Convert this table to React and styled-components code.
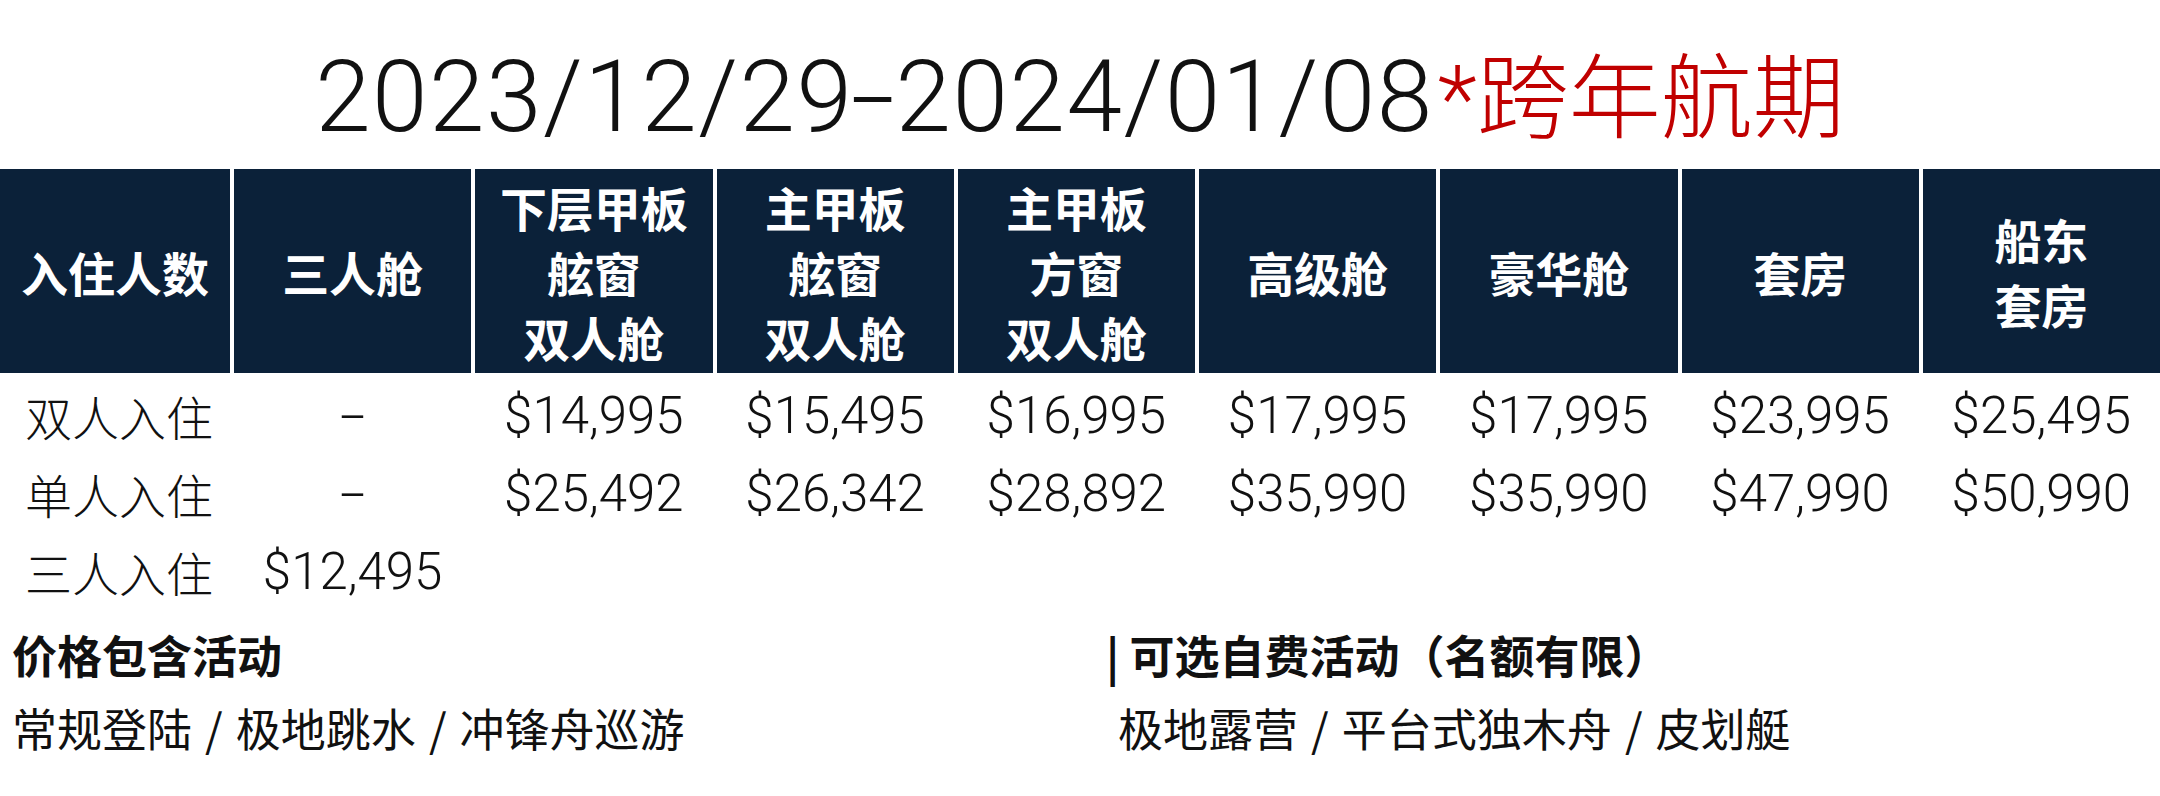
import React from 'react';
import styled, { createGlobalStyle } from 'styled-components';

const GlobalStyle = createGlobalStyle`
  html, body {
    margin: 0;
    padding: 0;
    background: #ffffff;
  }
  body {
    width: 2160px;
    height: 796px;
    overflow: hidden;
    font-family: "Noto Sans CJK SC", sans-serif;
    color: #111111;
  }
`;

const cabins = [
  ['入住人数'],
  ['三人舱'],
  ['下层甲板', '舷窗', '双人舱'],
  ['主甲板', '舷窗', '双人舱'],
  ['主甲板', '方窗', '双人舱'],
  ['高级舱'],
  ['豪华舱'],
  ['套房'],
  ['船东', '套房'],
];

const rows = [
  { label: '双人入住', prices: ['-', '$14,995', '$15,495', '$16,995', '$17,995', '$17,995', '$23,995', '$25,495'] },
  { label: '单人入住', prices: ['-', '$25,492', '$26,342', '$28,892', '$35,990', '$35,990', '$47,990', '$50,990'] },
  { label: '三人入住', prices: ['$12,495'] },
];

export default function App() {
  return (
    <Page>
      <GlobalStyle />
      <Title>
        2023/12/29<Dash>-</Dash>2024/01/08<Highlight>*跨年航期</Highlight>
      </Title>

      <HeaderRow>
        {cabins.map((lines, i) => (
          <HeaderCell key={i}>
            {lines.map(line => <span key={line}>{line}</span>)}
          </HeaderCell>
        ))}
      </HeaderRow>

      {rows.map(row => (
        <PriceRow key={row.label}>
          <RowLabel>{row.label}</RowLabel>
          {row.prices.map((price, i) => (
            <Price key={i} dash={price === '-'}>{price}</Price>
          ))}
        </PriceRow>
      ))}

      <Notes>
        <NoteColumn>
          <NoteTitle>价格包含活动</NoteTitle>
          <NoteText>常规登陆 / 极地跳水 / 冲锋舟巡游</NoteText>
        </NoteColumn>
        <NoteColumn>
          <NoteTitle>| 可选自费活动（名额有限）</NoteTitle>
          <NoteText indent>极地露营 / 平台式独木舟 / 皮划艇</NoteText>
        </NoteColumn>
      </Notes>
    </Page>
  );
}

const Page = styled.div`
  width: 2160px;
  height: 796px;
  display: flex;
  flex-direction: column;
`;

const Title = styled.h1`
  margin: 0;
  height: 169px;
  box-sizing: border-box;
  padding-top: 47px;
  font-family: Roboto, "Liberation Sans", "Noto Sans CJK SC", sans-serif;
  font-weight: 300;
  font-size: 100px;
  line-height: 100px;
  letter-spacing: 1.5px;
  text-align: center;
  white-space: nowrap;
  color: #111111;
`;

const Dash = styled.span`
  display: inline-block;
  margin: 0 6px;
  transform: scaleX(1.6);
`;

const Highlight = styled.span`
  color: #c00000;
  font-size: 92px;
  letter-spacing: 0;
  margin-left: 4px;
`;

const tableColumns = `
  display: grid;
  grid-template-columns: 230px repeat(8, 1fr);
  column-gap: 4px;
`;

const HeaderRow = styled.div`
  ${tableColumns}
  height: 204px;
  margin-bottom: 4px;
`;

const HeaderCell = styled.div`
  display: flex;
  flex-direction: column;
  align-items: center;
  justify-content: center;
  background: #0b2139;
  color: #ffffff;
  font-family: "Noto Sans CJK SC", sans-serif;
  font-weight: 700;
  font-size: 47px;
  line-height: 65px;
  white-space: nowrap;
`;

const PriceRow = styled.div`
  ${tableColumns}
  height: 78px;
  align-items: center;
`;

const RowLabel = styled.div`
  text-align: center;
  padding-left: 8px;
  font-family: "Noto Sans CJK SC", sans-serif;
  font-weight: 300;
  font-size: 47px;
  line-height: 78px;
`;

const Price = styled.div`
  text-align: center;
  font-family: Roboto, "Liberation Sans", sans-serif;
  font-weight: 300;
  font-size: 51px;
  line-height: 78px;
  transform: ${props => (props.dash ? 'scaleX(1.8)' : 'none')};
`;

const Notes = styled.div`
  display: grid;
  grid-template-columns: 1094px 1fr;
  padding-left: 12px;
  margin-top: 16px;
`;

const NoteColumn = styled.div`
  display: flex;
  flex-direction: column;
  gap: 17px;
`;

const NoteTitle = styled.div`
  font-family: "Noto Sans CJK SC", sans-serif;
  font-weight: 700;
  font-size: 45px;
  line-height: 56px;
  white-space: nowrap;
`;

const NoteText = styled.div`
  font-family: "Noto Sans CJK SC", sans-serif;
  font-weight: 400;
  font-size: 45px;
  line-height: 56px;
  white-space: nowrap;
  word-spacing: 3px;
  padding-left: ${props => (props.indent ? '12px' : '0')};
`;
